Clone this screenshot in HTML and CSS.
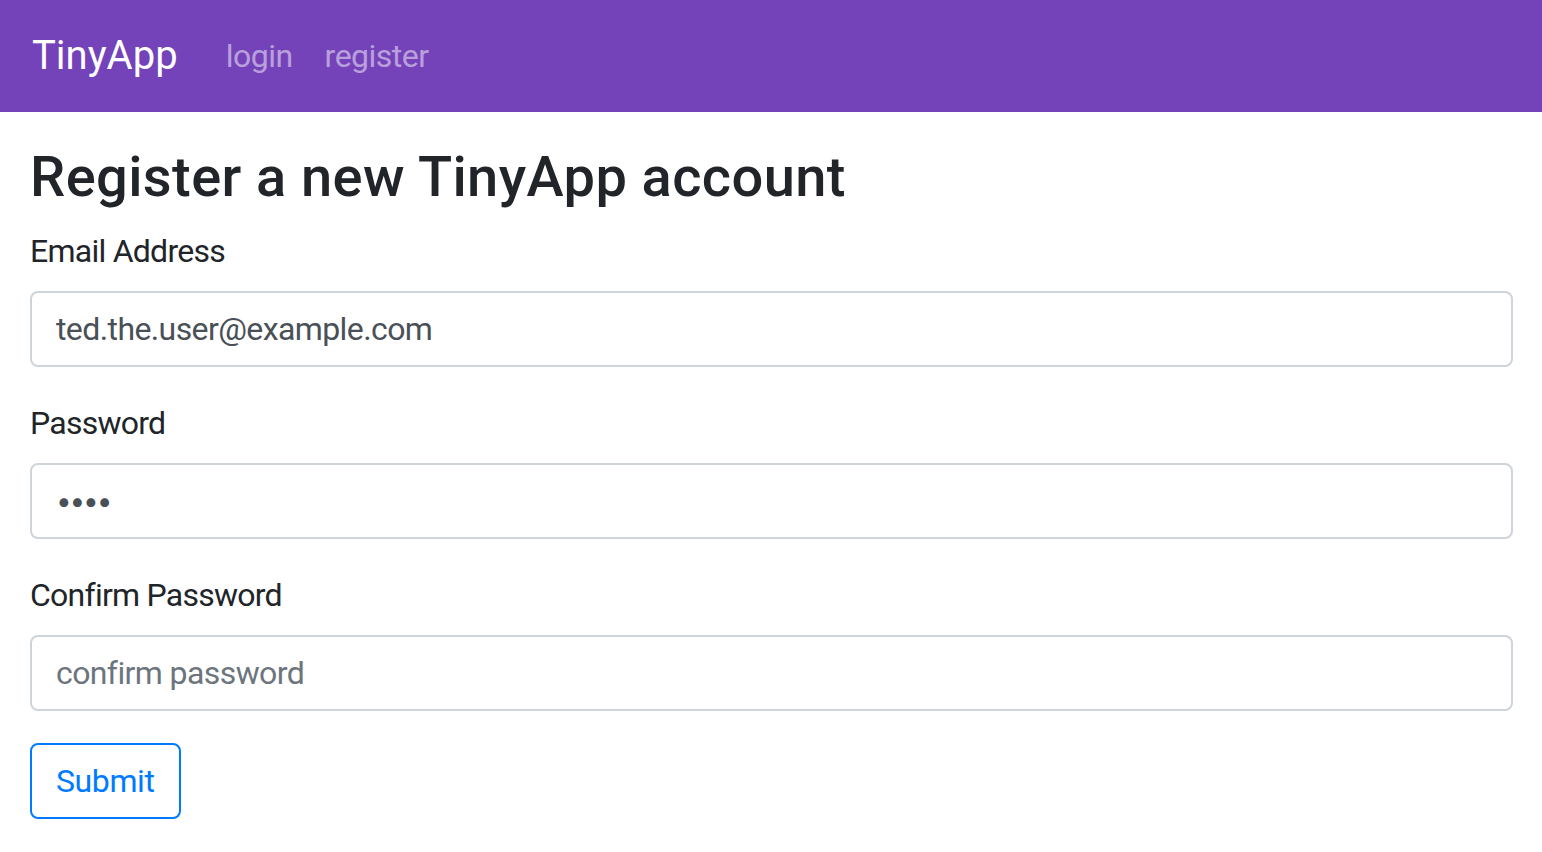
FILE: index.html
```html
<!DOCTYPE html>
<html lang="en">
<head>
<meta charset="utf-8">
<title>TinyApp - Register</title>
<link rel="stylesheet" href="styles.css">
</head>
<body>
<nav class="navbar">
  <a class="brand" href="#">TinyApp</a>
  <ul class="nav">
    <li><a class="nav-link" href="#">login</a></li>
    <li><a class="nav-link" href="#">register</a></li>
  </ul>
</nav>
<main class="container">
  <h3 class="title">Register a new TinyApp account</h3>
  <form class="form">
    <div class="form-group">
      <label class="label" for="email">Email Address</label>
      <input class="input" id="email" type="email" value="ted.the.user@example.com">
    </div>
    <div class="form-group">
      <label class="label" for="password">Password</label>
      <input class="input input-secret" id="password" type="password" value="1234">
    </div>
    <div class="form-group">
      <label class="label" for="confirm">Confirm Password</label>
      <input class="input" id="confirm" type="password" placeholder="confirm password">
    </div>
    <button class="btn" type="button">Submit</button>
  </form>
</main>
</body>
</html>
```
FILE: styles.css
```css
* { box-sizing: border-box; }
html, body { margin: 0; padding: 0; }
body {
  font-family: Roboto, "Liberation Sans", sans-serif;
  font-size: 32px;
  line-height: 1.5;
  color: #212529;
  background: #fff;
}
.navbar {
  display: flex;
  align-items: center;
  height: 112px;
  padding: 16px 32px;
  background: #7442b9;
}
.brand {
  font-size: 40px;
  line-height: 60px;
  padding: 10px 0;
  margin-right: 32px;
  color: #fff;
  text-decoration: none;
}
.nav {
  display: flex;
  list-style: none;
  margin: 0;
  padding: 0;
}
.nav-link {
  display: block;
  padding: 16px;
  color: rgba(255, 255, 255, 0.5);
  text-decoration: none;
  letter-spacing: -0.5px;
}
.container {
  padding: 32px 29px 0 30px;
}
.title {
  margin: 0 0 16px;
  font-size: 56px;
  line-height: 1.2;
  font-weight: 500;
  letter-spacing: 0.4px;
}
.form-group {
  margin-bottom: 32px;
}
.label {
  display: block;
  margin-bottom: 16px;
  letter-spacing: -0.75px;
}
.input {
  display: block;
  width: 100%;
  height: 76px;
  padding: 12px 24px;
  font: inherit;
  letter-spacing: -0.6px;
  color: #495057;
  background: #fff;
  border: 2px solid #ced4da;
  border-radius: 8px;
  outline: none;
}
.input-secret {
  font-family: Inter, Roboto, sans-serif;
  font-size: 28px;
  letter-spacing: -2.2px;
}
.input::placeholder {
  color: #6c757d;
  opacity: 1;
}
.btn {
  display: inline-block;
  height: 76px;
  padding: 12px 24px;
  font: inherit;
  letter-spacing: -0.4px;
  color: #007bff;
  background: transparent;
  border: 2px solid #007bff;
  border-radius: 8px;
}
```
